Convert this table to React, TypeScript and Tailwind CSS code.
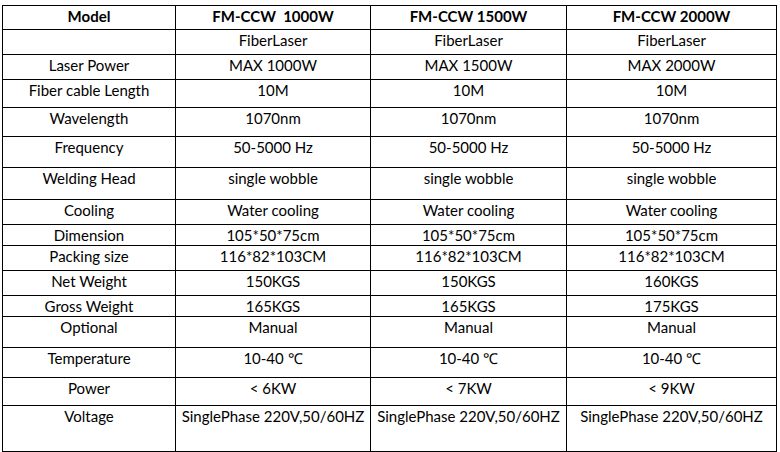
const rows = [
  { h: "h-[25px]", cells: ["", "FiberLaser", "FiberLaser", "FiberLaser"] },
  { h: "h-[25px]", cells: ["Laser Power", "MAX 1000W", "MAX 1500W", "MAX 2000W"] },
  { h: "h-[28px]", cells: ["Fiber cable Length", "10M", "10M", "10M"] },
  { h: "h-[29px]", cells: ["Wavelength", "1070nm", "1070nm", "1070nm"] },
  { h: "h-[31px]", cells: ["Frequency", "50-5000 Hz", "50-5000 Hz", "50-5000 Hz"] },
  { h: "h-[32px]", cells: ["Welding Head", "single wobble", "single wobble", "single wobble"] },
  { h: "h-[25px]", cells: ["Cooling", "Water cooling", "Water cooling", "Water cooling"] },
  { h: "h-[21px]", cells: ["Dimension", "105*50*75cm", "105*50*75cm", "105*50*75cm"] },
  { h: "h-[25px]", cells: ["Packing size", "116*82*103CM", "116*82*103CM", "116*82*103CM"] },
  { h: "h-[25px]", cells: ["Net Weight", "150KGS", "150KGS", "160KGS"] },
  { h: "h-[21px]", cells: ["Gross Weight", "165KGS", "165KGS", "175KGS"] },
  { h: "h-[31px]", cells: ["Optional", "Manual", "Manual", "Manual"] },
  { h: "h-[30px]", cells: ["Temperature", "10-40 ℃", "10-40 ℃", "10-40 ℃"] },
  { h: "h-[28px]", cells: ["Power", "< 6KW", "< 7KW", "< 9KW"] },
  { h: "h-[46px]", cells: ["Voltage", "SinglePhase 220V,50/60HZ", "SinglePhase 220V,50/60HZ", "SinglePhase 220V,50/60HZ"] },
]

const widths = ["w-[173px]", "w-[195px]", "w-[196px]", "w-[210px]"]

export default function App() {
  return (
    <div className="w-[780px] h-[452px] bg-white overflow-hidden">
      <div
        className="ml-[2px] mt-[5px] w-[775px] border-l border-t border-black text-[15px] leading-[20px] text-black"
        style={{ fontFamily: "Lato, 'Liberation Sans', sans-serif" }}
      >
        <div className="flex h-[24px] font-bold">
          {["Model", "FM-CCW\u00a0 1000W", "FM-CCW 1500W", "FM-CCW 2000W"].map((t, i) => (
            <div key={i} className={`${widths[i]} shrink-0 border-r border-b border-black text-center`}>
              {t}
            </div>
          ))}
        </div>
        {rows.map((row, r) => (
          <div key={r} className={`flex ${row.h}`}>
            {row.cells.map((t, i) => (
              <div
                key={i}
                className={`${widths[i]} shrink-0 border-r border-b border-black text-center whitespace-nowrap`}
              >
                {t}
              </div>
            ))}
          </div>
        ))}
      </div>
    </div>
  )
}
